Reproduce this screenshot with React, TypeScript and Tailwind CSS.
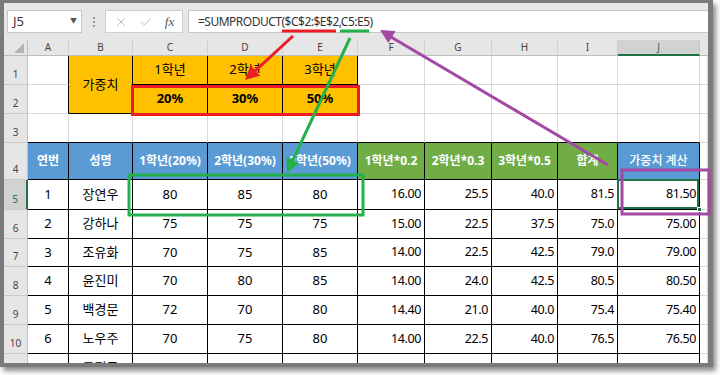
import { X, Check } from 'lucide-react'
import type { ReactNode } from 'react'

const FONT = "font-['Noto_Sans','Noto_Sans_CJK_KR',sans-serif]"

const letters = ['A', 'B', 'C', 'D', 'E', 'F', 'G', 'H', 'I', 'J']

const rows = [
  ['1', '장연우', '80', '85', '80', '16.00', '25.5', '40.0', '81.5', '81.50'],
  ['2', '강하나', '75', '75', '75', '15.00', '22.5', '37.5', '75.0', '75.00'],
  ['3', '조유화', '70', '75', '85', '14.00', '22.5', '42.5', '79.0', '79.00'],
  ['4', '윤진미', '70', '80', '85', '14.00', '24.0', '42.5', '80.5', '80.50'],
  ['5', '백경문', '72', '70', '80', '14.40', '21.0', '40.0', '75.4', '75.40'],
  ['6', '노우주', '70', '75', '80', '14.00', '22.5', '40.0', '76.5', '76.50'],
  ['7', '구정국', '70', '70', '70', '14.00', '21.0', '35.0', '70.0', '70.00'],
]

const heads = ['연번', '성명', '1학년(20%)', '2학년(30%)', '3학년(50%)', '1학년*0.2', '2학년*0.3', '3학년*0.5', '합계', '가중치 계산']

function Cell({ className = '', children }: { className?: string; children?: ReactNode }) {
  return (
    <div className={`flex items-center overflow-hidden whitespace-nowrap border-r border-b ${className}`}>
      {children}
    </div>
  )
}

function RowHead({ n, selected = false }: { n: string; selected?: boolean }) {
  return (
    <div
      className={`flex items-end justify-center border-b border-b-[#c8c8c8] pb-[2px] text-[10px] ${
        selected
          ? 'border-r-2 border-r-[#217346] bg-[#d2d2d2] text-[#217346]'
          : 'border-r border-r-[#bdbdbd] bg-[#e6e6e6] text-[#444]'
      }`}
    >
      {n}
    </div>
  )
}

const grid = 'border-[#d9d9d9] bg-white'

function Annotations() {
  return (
    <svg className="pointer-events-none absolute inset-0" width="720" height="375" viewBox="0 0 720 375">
      {/* red: weights */}
      <line x1="282" y1="31" x2="336" y2="31" stroke="#ed1c24" strokeWidth="3" />
      <line x1="293" y1="36" x2="254" y2="72" stroke="#ed1c24" strokeWidth="3" />
      <polygon points="245,80 260,75.7 250.6,65.3" fill="#ed1c24" />
      <rect x="132.5" y="86.5" width="226" height="28" fill="none" stroke="#ed1c24" strokeWidth="3" />
      {/* green: scores */}
      <line x1="340" y1="31" x2="369" y2="31" stroke="#22b14c" strokeWidth="3" />
      <line x1="350" y1="38" x2="292" y2="162" stroke="#22b14c" strokeWidth="3" />
      <polygon points="287,173 299.2,163.3 286.6,157.3" fill="#22b14c" />
      <rect x="129" y="175" width="234" height="40" fill="none" stroke="#22b14c" strokeWidth="3" />
      {/* purple: result */}
      <line x1="608" y1="165" x2="391" y2="37" stroke="#a349a4" strokeWidth="3" />
      <polygon points="380,30 395.6,31.1 388.4,43.1" fill="#a349a4" />
      <rect x="622" y="170" width="87" height="44" fill="none" stroke="#a349a4" strokeWidth="3" />
    </svg>
  )
}

export default function App() {
  return (
    <div className={`relative h-[375px] w-[720px] overflow-hidden bg-white ${FONT}`}>
      <div className="flex h-[367px] w-[713px] flex-col overflow-hidden border-t-[3px] border-r-[5px] border-b-4 border-l-4 border-[#7a7a7a] bg-[#e6e6e6] shadow-[3px_4px_5px_rgba(0,0,0,0.45)]">
        {/* formula bar */}
        <div className="flex h-[37px] shrink-0 items-start pt-[7px]">
          <div className="ml-[3px] flex h-[23px] w-[75px] items-center justify-between border border-[#c6c6c6] bg-white pr-[4px] pl-[5px] text-[13px] text-[#333]">
            J5
            <span className="text-[7px] text-[#555]">▼</span>
          </div>
          <div className="flex h-[23px] w-[23px] flex-col items-center justify-center gap-[2px]">
            <span className="h-[2px] w-[2px] bg-[#999]" />
            <span className="h-[2px] w-[2px] bg-[#999]" />
            <span className="h-[2px] w-[2px] bg-[#999]" />
          </div>
          <div className="flex h-[23px] w-[78px] items-center justify-around border border-[#d0d0d0] bg-white px-[2px] text-[#a8a8a8]">
            <X size={14} strokeWidth={1.3} />
            <Check size={14} strokeWidth={1.3} />
            <span className="font-['Liberation_Serif',serif] text-[13px] text-[#555] italic">fx</span>
          </div>
          <div className="ml-[5px] flex h-[23px] flex-1 items-center border border-r-0 border-[#c6c6c6] bg-white pl-[9px] text-[12px] tracking-[-0.5px] text-[#333]">
            =SUMPRODUCT($C$2:$E$2,C5:E5)
          </div>
        </div>

        {/* sheet */}
        <div className="grid min-h-0 flex-1 grid-cols-[24px_41px_64px_75px_75px_75px_67px_67px_66px_60px_82px_1fr] grid-rows-[16px_29px_29px_29px_37px_30px_29px_28px_29px_29px_29px_29px] overflow-hidden text-[12px] text-black">
          {/* column headers */}
          <div className="relative border-r border-b border-[#bdbdbd] bg-[#e6e6e6]">
            <div className="absolute right-[3px] bottom-[2px] h-0 w-0 border-b-[10px] border-l-[10px] border-b-[#b4b4b4] border-l-transparent" />
          </div>
          {letters.map((l) =>
            l === 'J' ? (
              <div key={l} className="flex items-center justify-center border-r border-b-2 border-r-[#c6c6c6] border-b-[#217346] bg-[#d2d2d2] text-[10px] text-[#217346]">
                {l}
              </div>
            ) : (
              <div key={l} className="flex items-center justify-center border-r border-b border-r-[#cfcfcf] border-b-[#bdbdbd] bg-[#e6e6e6] text-[10px] text-[#444]">
                {l}
              </div>
            ),
          )}
          <div className="border-b border-[#bdbdbd] bg-[#e6e6e6]" />

          {/* row 1 */}
          <RowHead n="1" />
          <Cell className="border-r-black border-b-[#d9d9d9] bg-white" />
          <Cell className="row-span-2 justify-center border-black bg-[#ffc000] text-[13px]">가중치</Cell>
          {['1학년', '2학년', '3학년'].map((t) => (
            <Cell key={t} className="justify-center border-black bg-[#ffc000] text-[13px]">
              {t}
            </Cell>
          ))}
          {[0, 1, 2, 3, 4, 5].map((i) => (
            <Cell key={i} className={grid} />
          ))}

          {/* row 2 */}
          <RowHead n="2" />
          <Cell className="border-r-black border-b-[#d9d9d9] bg-white" />
          {['20%', '30%', '50%'].map((t) => (
            <Cell key={t} className="justify-center border-black bg-[#ffc000] text-[13px] font-bold">
              {t}
            </Cell>
          ))}
          {[0, 1, 2, 3, 4, 5].map((i) => (
            <Cell key={i} className={grid} />
          ))}

          {/* row 3 */}
          <RowHead n="3" />
          {[0, 1, 2, 3, 4, 5, 6, 7, 8, 9].map((i) => (
            <Cell key={i} className="border-r-[#d9d9d9] border-b-black bg-white" />
          ))}
          <Cell className={grid} />

          {/* row 4: table head */}
          <RowHead n="4" />
          {heads.map((h, i) => (
            <Cell
              key={h}
              className={`justify-center border-black text-white ${
                i >= 5 && i <= 8 ? 'bg-[#70ad47] font-bold' : 'bg-[#5b9bd5]'
              } ${i < 5 ? 'font-bold' : ''} ${i === 9 ? 'font-medium' : ''}`}
            >
              {h}
            </Cell>
          ))}
          <Cell className={grid} />

          {/* data rows */}
          {rows.map((r, ri) => (
            <>
              <RowHead key={`h${ri}`} n={String(ri + 5)} selected={ri === 0} />
              {r.map((v, ci) =>
                ri === 0 && ci === 9 ? (
                  <Cell key={`${ri}-${ci}`} className="relative justify-end overflow-visible border-black bg-white pr-[3px] text-[12.5px] tracking-[-0.4px]">
                    {v}
                    <div className="absolute -top-px -left-px right-0 bottom-0 border-2 border-[#217346]" />
                    <div className="absolute -right-[3px] -bottom-[3px] h-[5px] w-[5px] border border-white bg-[#217346]" />
                  </Cell>
                ) : (
                  <Cell
                    key={`${ri}-${ci}`}
                    className={`border-black bg-white ${
                      ci < 5 ? 'justify-center text-[13px]' : 'justify-end pr-[3px] text-[12.5px] tracking-[-0.4px]'
                    }`}
                  >
                    {v}
                  </Cell>
                ),
              )}
              <Cell key={`e${ri}`} className={grid} />
            </>
          ))}
        </div>
      </div>
      <Annotations />
    </div>
  )
}
